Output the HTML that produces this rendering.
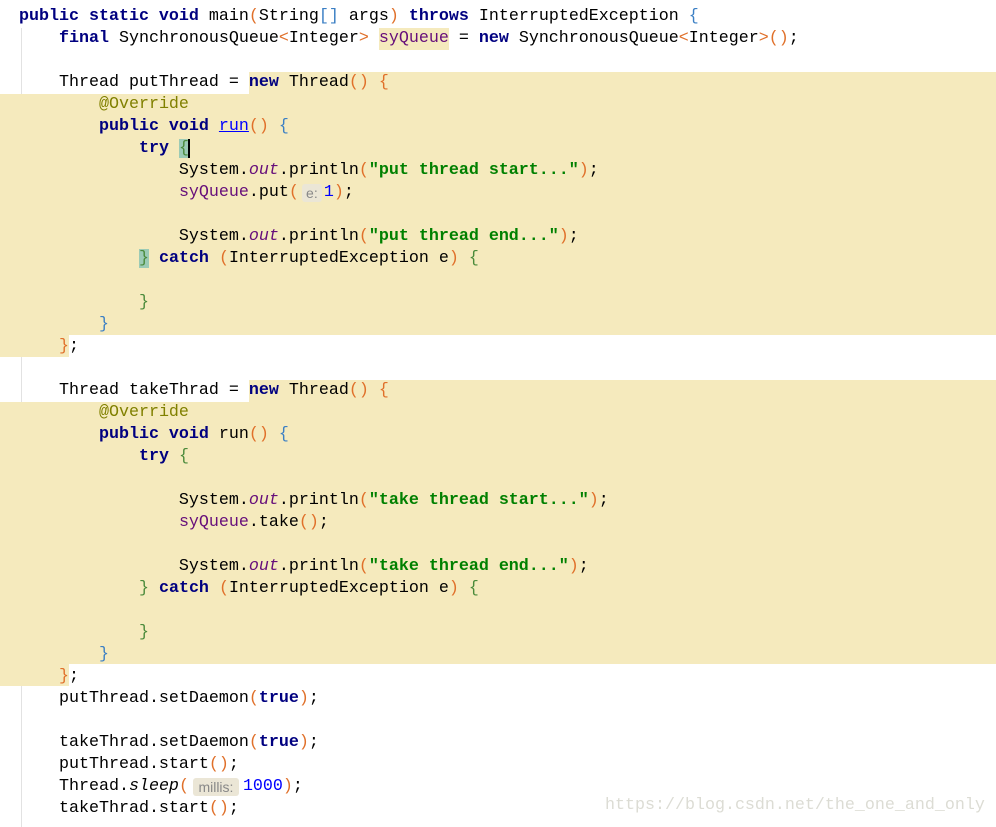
<!DOCTYPE html>
<html><head><meta charset="utf-8">
<style>
body{margin:0;width:996px;height:827px;background:#fff;position:relative;overflow:hidden;font-family:"Liberation Mono",monospace;font-size:16.67px;}
.hl{position:absolute;background:#f5eabd;}
.l{position:absolute;left:19px;height:22px;line-height:22px;white-space:pre;color:#000;}
.k{color:#000080;font-weight:bold}
.s{color:#008000;font-weight:bold}
.p{color:#660e7a}
.i{color:#660e7a;font-style:italic}
.a{color:#808000}
.n{color:#0000ff}
.o{color:#e0702a}
.b{color:#3b7fc4}
.g{color:#4a8a3a}
.h{display:inline-block;background:#ebe6d6;color:#888;font-family:"Liberation Sans",sans-serif;font-size:14px;line-height:18px;border-radius:3px;text-align:center;vertical-align:top;margin-top:2px}
.m{background:#9ccbb5}
.guide{position:absolute;width:1px;background:#e2e2e2}
.wm{position:absolute;left:605px;top:796px;color:#dcdcd4;font-size:16.67px;white-space:pre}
</style></head><body>
<div class="guide" style="left:21px;top:28px;height:799px"></div>
<div class="hl" style="left:249px;top:72px;width:747px;height:22px"></div>
<div class="hl" style="left:0;top:94px;width:996px;height:241px"></div>
<div class="hl" style="left:0;top:335px;width:69px;height:22px"></div>
<div class="hl" style="left:249px;top:380px;width:747px;height:22px"></div>
<div class="hl" style="left:0;top:402px;width:996px;height:262px"></div>
<div class="hl" style="left:0;top:664px;width:69px;height:22px"></div>
<div class="hl" style="left:379px;top:28px;width:70px;height:22px"></div>

<div class="l" style="top:6px"><span class="k">public static void</span> main<span class="o">(</span>String<span class="b">[]</span> args<span class="o">)</span> <span class="k">throws</span> InterruptedException <span class="b">{</span></div>
<div class="l" style="top:28px">    <span class="k">final</span> SynchronousQueue<span class="o">&lt;</span>Integer<span class="o">&gt;</span> <span class="p">syQueue</span> = <span class="k">new</span> SynchronousQueue<span class="o">&lt;</span>Integer<span class="o">&gt;()</span>;</div>
<div class="l" style="top:72px">    Thread putThread = <span class="k">new</span> Thread<span class="o">()</span> <span class="o">{</span></div>
<div class="l" style="top:94px">        <span class="a">@Override</span></div>
<div class="l" style="top:116px">        <span class="k">public void</span> <span style="color:#00f;text-decoration:underline">run</span><span class="o">()</span> <span class="b">{</span></div>
<div class="l" style="top:138px">            <span class="k">try</span> <span class="g m">{</span><span style="border-left:2px solid #000;margin-left:-1px"></span></div>
<div class="l" style="top:160px">                System.<span class="i">out</span>.println<span class="o">(</span><span class="s">"put thread start..."</span><span class="o">)</span>;</div>
<div class="l" style="top:182px">                <span class="p">syQueue</span>.put<span class="o">(</span><span class="h" style="width:20px;margin-left:3px;margin-right:2px">e:</span><span class="n">1</span><span class="o">)</span>;</div>
<div class="l" style="top:226px">                System.<span class="i">out</span>.println<span class="o">(</span><span class="s">"put thread end..."</span><span class="o">)</span>;</div>
<div class="l" style="top:248px">            <span class="g m">}</span> <span class="k">catch</span> <span class="o">(</span>InterruptedException e<span class="o">)</span> <span class="g">{</span></div>
<div class="l" style="top:292px">            <span class="g">}</span></div>
<div class="l" style="top:314px">        <span class="b">}</span></div>
<div class="l" style="top:336px">    <span class="o">}</span>;</div>
<div class="l" style="top:380px">    Thread takeThrad = <span class="k">new</span> Thread<span class="o">()</span> <span class="o">{</span></div>
<div class="l" style="top:402px">        <span class="a">@Override</span></div>
<div class="l" style="top:424px">        <span class="k">public void</span> run<span class="o">()</span> <span class="b">{</span></div>
<div class="l" style="top:446px">            <span class="k">try</span> <span class="g">{</span></div>
<div class="l" style="top:490px">                System.<span class="i">out</span>.println<span class="o">(</span><span class="s">"take thread start..."</span><span class="o">)</span>;</div>
<div class="l" style="top:512px">                <span class="p">syQueue</span>.take<span class="o">()</span>;</div>
<div class="l" style="top:556px">                System.<span class="i">out</span>.println<span class="o">(</span><span class="s">"take thread end..."</span><span class="o">)</span>;</div>
<div class="l" style="top:578px">            <span class="g">}</span> <span class="k">catch</span> <span class="o">(</span>InterruptedException e<span class="o">)</span> <span class="g">{</span></div>
<div class="l" style="top:622px">            <span class="g">}</span></div>
<div class="l" style="top:644px">        <span class="b">}</span></div>
<div class="l" style="top:666px">    <span class="o">}</span>;</div>
<div class="l" style="top:688px">    putThread.setDaemon<span class="o">(</span><span class="k">true</span><span class="o">)</span>;</div>
<div class="l" style="top:732px">    takeThrad.setDaemon<span class="o">(</span><span class="k">true</span><span class="o">)</span>;</div>
<div class="l" style="top:754px">    putThread.start<span class="o">()</span>;</div>
<div class="l" style="top:776px">    Thread.<span style="font-style:italic">sleep</span><span class="o">(</span><span class="h" style="width:46px;margin-left:4px;margin-right:4px">millis:</span><span class="n">1000</span><span class="o">)</span>;</div>
<div class="l" style="top:798px">    takeThrad.start<span class="o">()</span>;</div>
<div class="wm">https://blog.csdn.net/the_one_and_only</div>
</body></html>
